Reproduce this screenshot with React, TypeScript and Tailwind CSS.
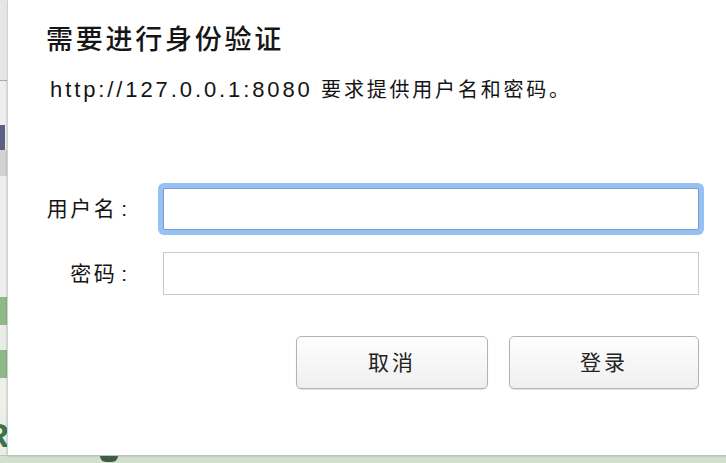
const font = { fontFamily: '"Liberation Sans", "Noto Sans CJK SC", sans-serif' };

function LeftStrip() {
  return (
    <div className="flex w-[7px] shrink-0 flex-col bg-[#eceeea]">
      <div className="h-[80px] border-r border-[#f6f6f6] bg-[#e6e6e6]" />
      <div className="h-px bg-[#a9a9a9]" />
      <div className="h-[44px] bg-[#eeeeee]" />
      <div className="flex h-[25px] bg-[#eeeeee]">
        <div className="w-[5px] bg-[#5b6084]" />
      </div>
      <div className="h-[26px] bg-[#d3d3d3]" />
      <div className="h-[121px] bg-[#eeeeee]" />
      <div className="h-[28px] bg-[#8fba88]" />
      <div className="h-[25px] bg-[#e9ede5]" />
      <div className="h-[28px] bg-[#8fba88]" />
      <div className="h-[37px] bg-[#eef1ea]" />
      <div className="flex h-[40px] justify-end overflow-hidden">
        <span className="-mr-[2px] text-[34px] font-bold leading-[40px] text-[#3a7549]" style={font}>R</span>
      </div>
    </div>
  );
}

function Field({ label, focused }: { label: string; focused?: boolean }) {
  return (
    <div className="flex items-center">
      <div className="w-[119px] text-right text-[21px] leading-[24px] text-[#141414]" style={font}>
        <span className="tracking-[2.5px]">{label}</span>
        <span className="ml-[4px]">:</span>
      </div>
      <div className="ml-[36px]">
        <input
          className={
            focused
              ? 'h-[42px] w-[536px] rounded-[2px] border border-[#7c9cc6] bg-white shadow-[0_0_0_5px_#95c1f5] outline-none'
              : 'h-[43px] w-[536px] border border-[#c9c9c9] bg-white outline-none'
          }
        />
      </div>
    </div>
  );
}

function Button({ children, w }: { children: string; w: string }) {
  return (
    <button
      className={`${w} h-[53px] rounded-[5px] border border-[#b3b3b3] bg-gradient-to-b from-[#fefefe] to-[#efefef] text-[21px] tracking-[3px] text-[#222222] shadow-[0_1px_1px_rgba(0,0,0,0.12)]`}
      style={font}
    >
      {children}
    </button>
  );
}

export default function App() {
  return (
    <div className="flex h-[463px] w-[726px] flex-col overflow-hidden bg-[#d3e0cd]">
      <div className="flex h-[455px]">
        <LeftStrip />
        <div className="flex flex-1 flex-col border-l border-[#cfd3cc] bg-white shadow-[0_1px_2px_rgba(0,0,0,0.25)]">
          <h1
            className="ml-[38px] mt-[24px] text-[27px] font-medium leading-[32px] tracking-[2.75px] text-[#161616]"
            style={font}
          >
            需要进行身份验证
          </h1>
          <p className="ml-[42px] mt-[22px] text-[20px] leading-[24px] text-[#141414]" style={font}>
            <span className="text-[22px] tracking-[2.9px]">http://127.0.0.1:8080</span>
            <span className="tracking-[2.8px]"> 要求提供用户名和密码。</span>
          </p>
          <div className="mt-[86px] flex flex-col gap-[22px]">
            <Field label="用户名" focused />
            <Field label="密码" />
          </div>
          <div className="mt-[41px] flex gap-[21px] pl-[288px]">
            <Button w="w-[192px]">取消</Button>
            <Button w="w-[190px]">登录</Button>
          </div>
        </div>
      </div>
      <div className="flex h-[8px] border-t border-[#b9c7b3]">
        <div className="ml-[100px] h-[6px] w-[18px] rounded-b-full bg-[#3f5c47]" />
      </div>
    </div>
  );
}
